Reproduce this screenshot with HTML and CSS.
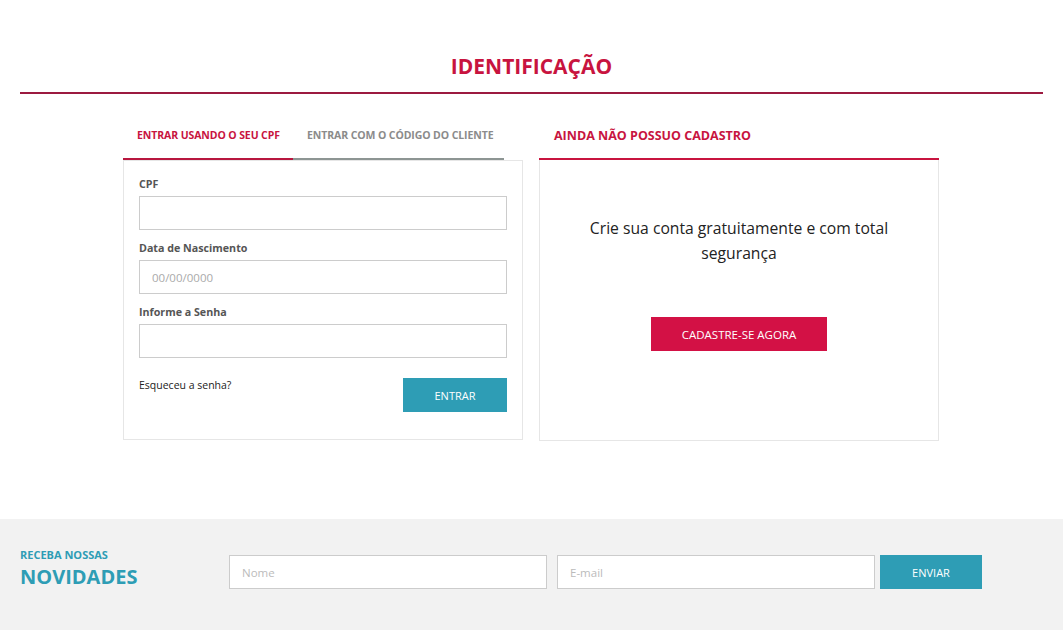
FILE: index.html
```html
<!DOCTYPE html>
<html lang="pt-BR">
<head>
<meta charset="utf-8">
<title>Identificação</title>
<link rel="stylesheet" href="styles.css">
</head>
<body>
<header class="page-head">
  <h1 class="page-title">IDENTIFICAÇÃO</h1>
</header>
<main class="login">
  <section class="col">
    <nav class="tabs">
      <span class="tab tab-active">ENTRAR USANDO O SEU CPF</span>
      <span class="tab tab-idle">ENTRAR COM O CÓDIGO DO CLIENTE</span>
    </nav>
    <form class="panel form-panel">
      <label class="field-label">CPF</label>
      <input class="field" type="text">
      <label class="field-label">Data de Nascimento</label>
      <input class="field" type="text" placeholder="00/00/0000">
      <label class="field-label">Informe a Senha</label>
      <input class="field" type="password">
      <div class="form-foot">
        <a class="forgot">Esqueceu a senha?</a>
        <button class="btn btn-teal btn-enter" type="button">ENTRAR</button>
      </div>
    </form>
  </section>
  <section class="col">
    <div class="register-head">AINDA NÃO POSSUO CADASTRO</div>
    <div class="panel register-panel">
      <p class="register-text">Crie sua conta gratuitamente e com total segurança</p>
      <button class="btn btn-red" type="button">CADASTRE-SE AGORA</button>
    </div>
  </section>
</main>
<footer class="news">
  <div class="news-title">
    <span class="news-small">RECEBA NOSSAS</span>
    <span class="news-big">NOVIDADES</span>
  </div>
  <input class="news-field" type="text" placeholder="Nome">
  <input class="news-field news-email" type="text" placeholder="E-mail">
  <button class="btn btn-teal btn-send" type="button">ENVIAR</button>
</footer>
</body>
</html>
```

FILE: styles.css
```css
* { box-sizing: border-box; }
body {
  margin: 0;
  font-family: "Open Sans", "Noto Sans", sans-serif;
  color: #222;
  background: #fff;
}
.page-head {
  margin: 0 20px;
  padding-top: 49px;
  border-bottom: 2px solid #9c1a40;
}
.page-title {
  margin: 0;
  text-align: center;
  font-size: 21px;
  line-height: 34px;
  font-weight: 700;
  color: #c8143f;
  padding-bottom: 9px;
}
.login {
  display: flex;
  justify-content: center;
  gap: 16px;
  padding-right: 1px;
}
.col {
  width: 400px;
  display: flex;
  flex-direction: column;
}
.tabs {
  display: flex;
  height: 66px;
}
.tab {
  font-size: 10.5px;
  font-weight: 700;
  line-height: 16px;
  padding: 33px 14px 0;
  white-space: nowrap;
  letter-spacing: -0.1px;
}
.tab-active {
  width: 170px;
  color: #c8143f;
  border-bottom: 2px solid #b8163f;
}
.tab-idle {
  width: 211px;
  color: #8b8b8b;
  border-bottom: 2px solid #8d9593;
}
.panel {
  border: 1px solid #e6e6e6;
  background: #fff;
}
.form-panel {
  margin: 0;
  padding: 13px 15px 27px;
  display: flex;
  flex-direction: column;
}
.field-label {
  font-size: 10.7px;
  font-weight: 700;
  color: #555;
  line-height: 20px;
  margin-bottom: 2px;
}
.field {
  height: 34px;
  border: 1px solid #cccccc;
  font-family: inherit;
  font-size: 11.5px;
  padding: 0 12px;
  margin-bottom: 8px;
  color: #333;
}
.field::placeholder { color: #aaa; }
.form-foot {
  display: flex;
  justify-content: space-between;
  align-items: flex-start;
  margin-top: 12px;
}
.forgot {
  font-size: 10.5px;
  line-height: 14px;
  color: #222;
}
.btn {
  border: 0;
  color: #fff;
  font-family: inherit;
  font-size: 11px;
  cursor: pointer;
}
.btn-teal { background: #2e9db5; }
.btn-enter {
  width: 104px;
  height: 34px;
}
.register-head {
  height: 66px;
  padding: 33px 15px 0;
  font-size: 12.5px;
  font-weight: 700;
  line-height: 18px;
  color: #c8143f;
  border-bottom: 2px solid #c8143f;
}
.register-panel {
  border-top: 0;
  padding: 55px 0 89px;
  display: flex;
  flex-direction: column;
  align-items: center;
}
.register-text {
  margin: 1px 0 51px;
  width: 330px;
  text-align: center;
  font-size: 15.7px;
  line-height: 25px;
  color: #222;
}
.btn-red {
  background: #d31145;
  width: 176px;
  height: 34px;
  font-size: 11.5px;
}
.news {
  margin-top: 78px;
  background: #f2f2f2;
  height: 111px;
  display: flex;
  align-items: flex-start;
  padding: 36px 20px 0;
}
.news-title {
  width: 209px;
  margin-top: -7px;
  display: flex;
  flex-direction: column;
}
.news-small {
  font-size: 11px;
  font-weight: 700;
  line-height: 14px;
  color: #2e9db5;
}
.news-big {
  font-size: 20px;
  font-weight: 700;
  line-height: 29px;
  color: #2e9db5;
}
.news-field {
  width: 318px;
  height: 34px;
  border: 1px solid #cccccc;
  background: #fff;
  padding: 0 12px;
  font-family: inherit;
  font-size: 11.5px;
}
.news-field::placeholder { color: #bbb; }
.news-email { margin-left: 10px; }
.btn-send {
  margin-left: 5px;
  width: 102px;
  height: 34px;
}
```
